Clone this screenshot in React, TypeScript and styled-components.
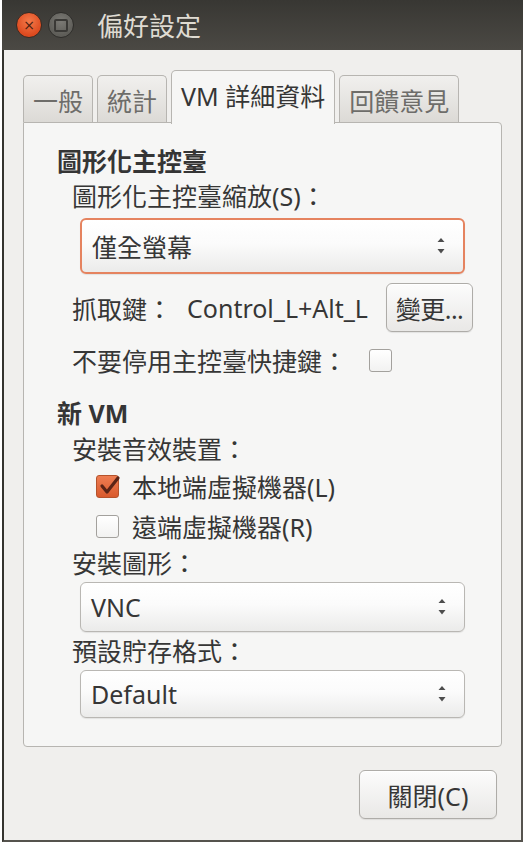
import styled, { createGlobalStyle, css } from 'styled-components';

const GlobalStyle = createGlobalStyle`
  html, body {
    margin: 0;
    padding: 0;
    background: #ffffff;
  }
  body {
    font-family: "Noto Sans", "Noto Sans CJK TC", sans-serif;
    color: #363636;
  }
`;

const Window = styled.div`
  box-sizing: border-box;
  margin-left: 2px;
  width: 521px;
  height: 842px;
  display: flex;
  flex-direction: column;
  background: #f0efed;
  border-left: 2px solid #35342f;
  border-right: 2px solid #55534e;
  border-bottom: 2px solid #55534e;
`;

const TitleBar = styled.div`
  height: 50px;
  flex-shrink: 0;
  display: flex;
  align-items: center;
  gap: 6px;
  background: linear-gradient(to bottom, #383733, #4b4944);
  margin: 0 -2px;
  padding-left: 14px;
`;

const CloseDot = styled.div`
  width: 26px;
  height: 26px;
  border-radius: 50%;
  box-sizing: border-box;
  border: 1px solid #3a2a22;
  background: radial-gradient(circle at 50% 35%, #f47a4a, #dc4a1f 70%);
  display: flex;
  align-items: center;
  justify-content: center;
  color: #4a1e10;
  font-size: 14px;
  font-family: "DejaVu Sans", sans-serif;
  line-height: 1;
`;

const MinDot = styled.div`
  width: 26px;
  height: 26px;
  border-radius: 50%;
  box-sizing: border-box;
  border: 1px solid #2e2d2a;
  background: radial-gradient(circle at 50% 35%, #7b7a75, #5e5d58 70%);
  display: flex;
  align-items: center;
  justify-content: center;

  &::after {
    content: '';
    width: 10px;
    height: 9px;
    border: 2px solid #3a3936;
    border-radius: 2px;
  }
`;

const Title = styled.div`
  margin-left: 17px;
  font-family: "Noto Sans CJK TC", sans-serif;
  font-size: 26px;
  color: #dfdbd2;
  line-height: 1;
`;

const Body = styled.div`
  flex: 1;
  display: flex;
  flex-direction: column;
  padding: 20px 0 0 19px;
`;

const TabRow = styled.div`
  display: flex;
  align-items: flex-end;
  gap: 4px;
  height: 52px;
`;

const Tab = styled.div<{ $active?: boolean }>`
  box-sizing: border-box;
  display: flex;
  align-items: center;
  padding: 0 9px;
  font-size: 25px;
  border: 1px solid #b7b5b1;
  border-bottom: none;
  border-radius: 5px 5px 0 0;
  ${({ $active }) =>
    $active
      ? css`
          height: 54px;
          margin-bottom: -2px;
          padding-bottom: 6px;
          background: #f6f6f5;
          color: #363636;
          position: relative;
          z-index: 1;
        `
      : css`
          height: 47px;
          padding-top: 1px;
          background: linear-gradient(to bottom, #f1f0ee, #dcdad6);
          color: #6e6d6a;
        `}
`;

const Panel = styled.div`
  box-sizing: border-box;
  width: 479px;
  height: 625px;
  border: 1px solid #b7b5b1;
  border-radius: 0 4px 4px 4px;
  background: #f6f6f5;
  padding: 21px 36px 0 33px;
  display: flex;
  flex-direction: column;
`;

const Heading = styled.div<{ $top?: number }>`
  font-size: 25px;
  font-weight: bold;
  line-height: 34px;
  color: #353535;
  margin-top: ${({ $top }) => $top ?? 0}px;
`;

const Label = styled.div<{ $top?: number }>`
  font-size: 25px;
  line-height: 34px;
  padding-left: 15px;
  margin-top: ${({ $top }) => $top ?? 0}px;
`;

const Select = styled.div<{ $top?: number; $height: number; $focused?: boolean }>`
  box-sizing: border-box;
  margin-left: 23px;
  margin-top: ${({ $top }) => $top ?? 0}px;
  height: ${({ $height }) => $height}px;
  display: flex;
  align-items: center;
  justify-content: space-between;
  padding: 0 18px 0 10px;
  font-size: 25px;
  border-radius: 6px;
  background: linear-gradient(to bottom, #ffffff 0%, #fbfbfb 45%, #ebebea 100%);
  border: ${({ $focused }) => ($focused ? '2px solid #e5835f' : '1px solid #b9b7b3')};
  box-shadow: 0 1px 1px rgba(0, 0, 0, 0.08);
`;

const Row = styled.div<{ $top?: number; $height: number }>`
  display: flex;
  align-items: center;
  padding-left: 15px;
  height: ${({ $height }) => $height}px;
  margin-top: ${({ $top }) => $top ?? 0}px;
  margin-right: -8px;
  font-size: 25px;
`;

const KeyValue = styled.span`
  margin-left: 15px;
`;

const PushButton = styled.div<{ $width: number; $height: number }>`
  box-sizing: border-box;
  width: ${({ $width }) => $width}px;
  height: ${({ $height }) => $height}px;
  display: flex;
  align-items: center;
  justify-content: center;
  font-size: 25px;
  color: #363636;
  border: 1px solid #aeaca8;
  border-radius: 6px;
  background: linear-gradient(to bottom, #fcfcfc, #e9e8e6);
  box-shadow: inset 0 1px 0 #ffffff, 0 1px 1px rgba(0, 0, 0, 0.08);
`;

const ChangeButton = styled(PushButton)`
  margin-left: auto;
  letter-spacing: -0.5px;
`;

const CheckBox = styled.div<{ $checked?: boolean }>`
  box-sizing: border-box;
  width: 23px;
  height: 23px;
  border-radius: 3px;
  flex-shrink: 0;
  position: relative;
  ${({ $checked }) =>
    $checked
      ? css`
          border: 1px solid #b5532c;
          background: linear-gradient(to bottom, #ee7d52, #d95a2d);
        `
      : css`
          border: 1px solid #a3a19d;
          background: linear-gradient(to bottom, #ffffff, #f2f2f1);
        `}

  svg {
    position: absolute;
    left: 1px;
    top: -4px;
  }
`;

const InlineCheck = styled(CheckBox)`
  margin-left: 22px;
`;

const CheckRow = styled.div<{ $top?: number }>`
  display: flex;
  align-items: center;
  gap: 13px;
  padding-left: 39px;
  height: 34px;
  margin-top: ${({ $top }) => $top ?? 0}px;
  font-size: 25px;
`;

const Footer = styled.div`
  display: flex;
  justify-content: flex-end;
  padding: 23px 24px 0 0;
`;

const Arrows = () => (
  <svg width="8" height="18" viewBox="0 0 8 18">
    <polygon points="0.5,5 4,1 7.5,5" fill="#4d4d4d" />
    <polygon points="0.5,12 7.5,12 4,16.5" fill="#4d4d4d" />
  </svg>
);

const CheckMark = () => (
  <svg width="24" height="26" viewBox="0 0 24 26">
    <polyline
      points="4,14 9,20 20,6"
      fill="none"
      stroke="#5a2416"
      strokeWidth="3.2"
      strokeLinecap="round"
      strokeLinejoin="round"
    />
  </svg>
);

const tabs = [
  { label: '一般', active: false },
  { label: '統計', active: false },
  { label: 'VM 詳細資料', active: true },
  { label: '回饋意見', active: false },
];

const App: React.FC = () => {
  return (
    <>
      <GlobalStyle />
      <Window>
        <TitleBar>
          <CloseDot>×</CloseDot>
          <MinDot />
          <Title>偏好設定</Title>
        </TitleBar>
        <Body>
          <TabRow>
            {tabs.map((tab) => (
              <Tab key={tab.label} $active={tab.active}>
                {tab.label}
              </Tab>
            ))}
          </TabRow>
          <Panel>
            <Heading>圖形化主控臺</Heading>
            <Label $top={1}>圖形化主控臺縮放(S)：</Label>
            <Select $top={5} $height={56} $focused>
              <span>僅全螢幕</span>
              <Arrows />
            </Select>
            <Row $top={9} $height={49}>
              <span>抓取鍵：</span>
              <KeyValue>Control_L+Alt_L</KeyValue>
              <ChangeButton $width={87} $height={49}>
                變更...
              </ChangeButton>
            </Row>
            <Row $top={11} $height={34}>
              <span>不要停用主控臺快捷鍵：</span>
              <InlineCheck />
            </Row>

            <Heading $top={19}>新 VM</Heading>
            <Label $top={2}>安裝音效裝置：</Label>
            <CheckRow $top={3}>
              <CheckBox $checked>
                <CheckMark />
              </CheckBox>
              <span>本地端虛擬機器(L)</span>
            </CheckRow>
            <CheckRow $top={6}>
              <CheckBox />
              <span>遠端虛擬機器(R)</span>
            </CheckRow>
            <Label $top={3}>安裝圖形：</Label>
            <Select $top={2} $height={50}>
              <span>VNC</span>
              <Arrows />
            </Select>
            <Label $top={2}>預設貯存格式：</Label>
            <Select $top={2} $height={48}>
              <span>Default</span>
              <Arrows />
            </Select>
          </Panel>
          <Footer>
            <PushButton $width={138} $height={49}>
              關閉(C)
            </PushButton>
          </Footer>
        </Body>
      </Window>
    </>
  );
};

export default App;
